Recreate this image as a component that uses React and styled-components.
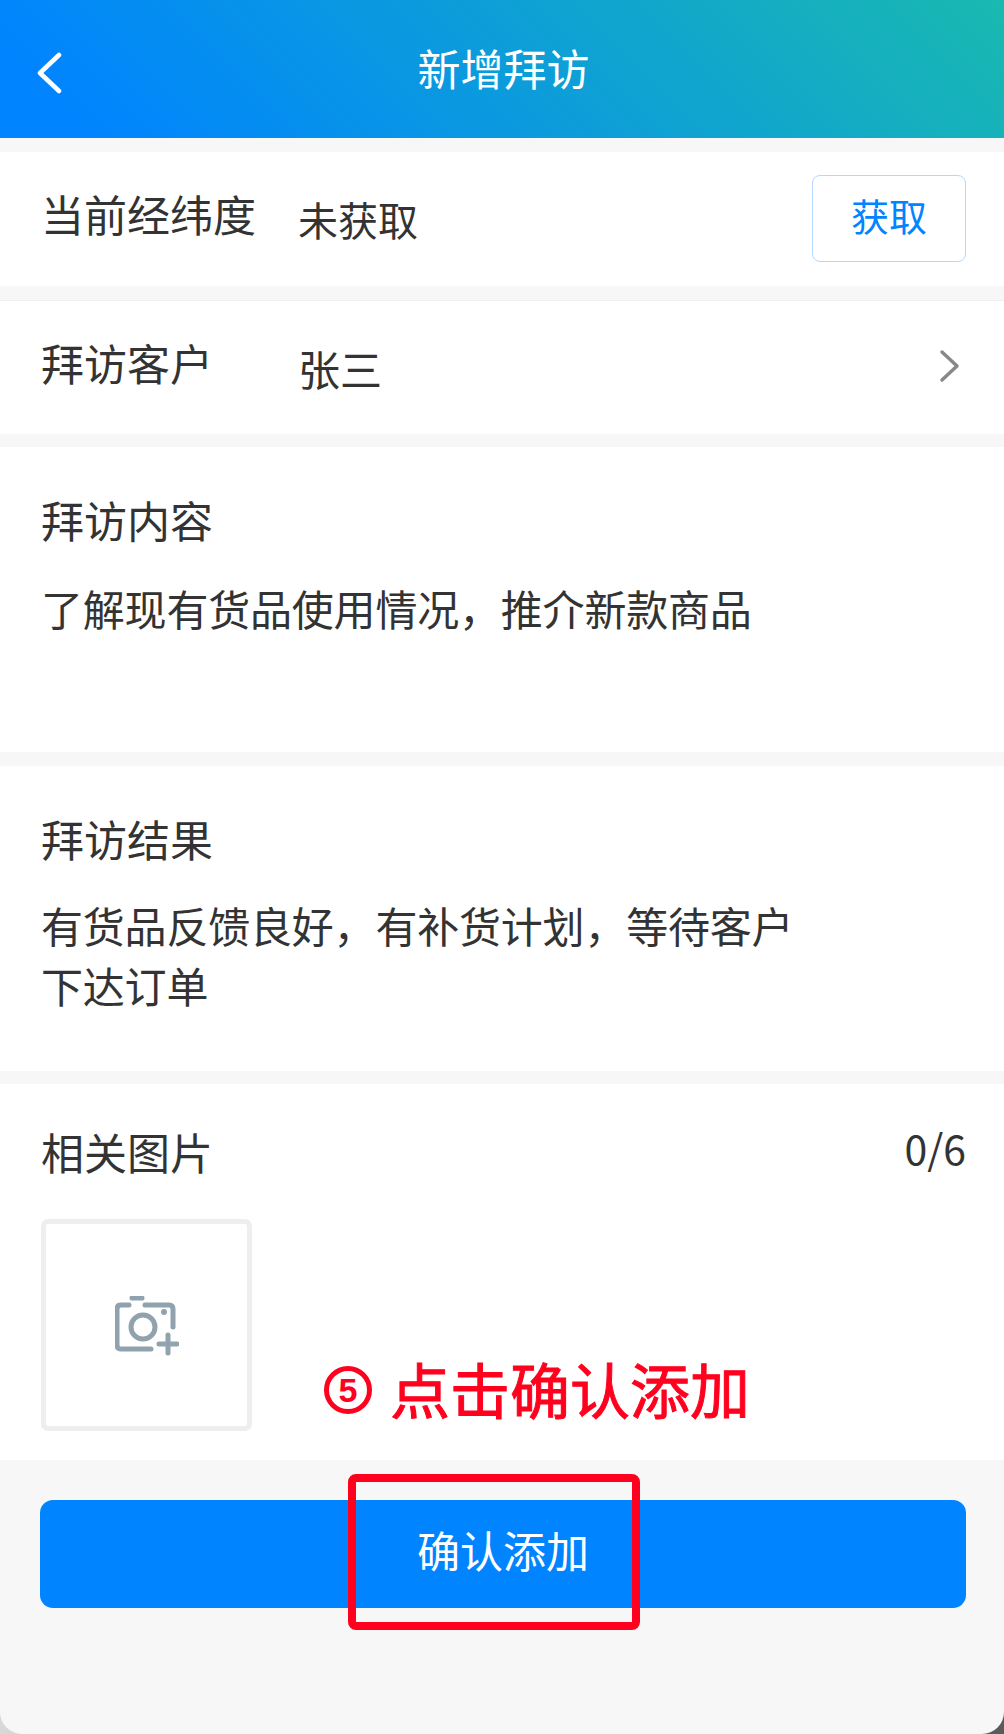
import React from 'react'
import styled, { createGlobalStyle } from 'styled-components'

const GlobalStyle = createGlobalStyle`
  html, body {
    margin: 0;
    padding: 0;
    background: linear-gradient(90deg, #d8d8d8 0%, #5a5a5a 100%);
  }
  body {
    font-family: "Noto Sans CJK SC", "Noto Sans", sans-serif;
  }
`

const Page = styled.div`
  position: relative;
  width: 1004px;
  height: 1734px;
  display: flex;
  flex-direction: column;
  background: #f7f7f7;
  border-radius: 0 0 22px 22px;
  overflow: hidden;
`

const Header = styled.header`
  height: 138px;
  flex: none;
  box-sizing: border-box;
  padding: 8px 32px 0 35px;
  display: grid;
  grid-template-columns: 28px 1fr 28px;
  align-items: center;
  background: linear-gradient(45deg, #0084ff 8%, #1ab9b0 100%);
`

const Title = styled.h1`
  margin: 0 0 12px;
  text-align: center;
  color: #fff;
  font-size: 43px;
  font-weight: 400;
  line-height: 60px;
`

const Section = styled.section`
  flex: none;
  box-sizing: border-box;
  height: ${p => p.$height}px;
  margin-top: ${p => p.$gap || 14}px;
  background: #fff;
`

const Row = styled(Section)`
  display: flex;
  align-items: center;
  padding: 0 38px 0 41px;
  border-top: ${p => (p.$line ? '1px solid #f0f0f0' : '0')};
`

const Label = styled.span`
  flex: none;
  width: ${p => (p.$wide ? '257px' : 'auto')};
  margin-bottom: ${p => (p.$wide ? '12px' : '0')};
  color: #333;
  font-size: 43px;
  line-height: 60px;
`

const Value = styled.span`
  flex: 1;
  color: #333;
  font-size: ${p => p.$size}px;
  line-height: 60px;
`

const FetchButton = styled.button`
  flex: none;
  width: 154px;
  height: 87px;
  margin-bottom: 2px;
  padding: 0 0 8px;
  background: #fff;
  border: 1px solid #b3d8ff;
  border-radius: 8px;
  color: #0084ff;
  font-family: inherit;
  font-size: 38px;
`

const Chevron = styled.span`
  display: flex;
  margin: 0 5px 4px 0;
`

const Block = styled(Section)`
  padding: ${p => p.$top || 42}px 38px 0 41px;
`

const BlockText = styled.p`
  margin: ${p => p.$top || 29}px 0 0;
  width: 770px;
  color: #333;
  font-size: 42px;
  letter-spacing: -0.2px;
  line-height: 60px;
`

const BlockHead = styled.div`
  display: flex;
  justify-content: space-between;
`

const Count = styled.span`
  margin-top: -4px;
  color: #333;
  font-size: 41px;
  line-height: 60px;
`

const UploadBox = styled.div`
  box-sizing: border-box;
  width: 211px;
  height: 212px;
  margin-top: 38px;
  padding-top: 2px;
  display: flex;
  align-items: center;
  justify-content: center;
  border: 5px solid #eee;
  border-radius: 7px;
`

const Footer = styled.footer`
  flex: 1;
  padding: 40px 38px 0 40px;
`

const SubmitButton = styled.button`
  display: block;
  width: 100%;
  height: 108px;
  padding: 0 0 10px;
  border: 0;
  border-radius: 13px;
  background: #0084ff;
  color: #fff;
  font-family: inherit;
  font-size: 43px;
`

const Hint = styled.div`
  position: absolute;
  left: 324px;
  top: 1346px;
  display: flex;
  align-items: center;
  gap: 18px;
  color: #ff001e;
  font-size: 60px;
  line-height: 84px;
  -webkit-text-stroke: 1px #ff001e;
`

const HintMark = styled.span`
  box-sizing: border-box;
  width: 48px;
  height: 48px;
  margin-top: 4px;
  display: flex;
  align-items: center;
  justify-content: center;
  border: 5px solid #ff001e;
  border-radius: 50%;
  font-family: "Liberation Sans", sans-serif;
  font-size: 34px;
  font-weight: 700;
  line-height: 1;
  -webkit-text-stroke: 0;
`

const HighlightBox = styled.div`
  position: absolute;
  left: 348px;
  top: 1474px;
  box-sizing: border-box;
  width: 292px;
  height: 156px;
  border: 8px solid #ff001e;
  border-radius: 8px;
`

const BackIcon = () => (
  <svg width="28" height="42" viewBox="0 0 28 42" fill="none">
    <path d="M24 3 L5 21 L24 39" stroke="#fff" strokeWidth="4.5" strokeLinecap="round" strokeLinejoin="round" />
  </svg>
)

const ChevronIcon = () => (
  <svg width="22" height="34" viewBox="0 0 22 34" fill="none">
    <path d="M3 3 L18 17 L3 31" stroke="#888" strokeWidth="3.5" strokeLinecap="round" strokeLinejoin="round" />
  </svg>
)

const CameraIcon = () => (
  <svg width="64" height="60" viewBox="0 0 64 60" fill="none" stroke="#8fa2ad" strokeWidth="5" strokeLinecap="round" strokeLinejoin="round">
    <path d="M14 9 H6 Q2 9 2 13 V49 Q2 53 6 53 H36" />
    <path d="M30 9 H54 Q58 9 58 13 V31" />
    <path d="M17 2 H27" />
    <circle cx="28" cy="31" r="12" />
    <circle cx="49" cy="16" r="3" fill="#8fa2ad" stroke="none" />
    <path d="M44 48 H62 M53 39 V57" />
  </svg>
)

const App = () => {
  return (
    <Page>
      <GlobalStyle />
      <Header>
        <BackIcon />
        <Title>新增拜访</Title>
      </Header>

      <Row $height={134}>
        <Label $wide>当前经纬度</Label>
        <Value $size={40}>未获取</Value>
        <FetchButton>获取</FetchButton>
      </Row>

      <Row $height={134} $line>
        <Label $wide>拜访客户</Label>
        <Value $size={42}>张三</Value>
        <Chevron>
          <ChevronIcon />
        </Chevron>
      </Row>

      <Block $height={305} $gap={13}>
        <Label>拜访内容</Label>
        <BlockText>了解现有货品使用情况，推介新款商品</BlockText>
      </Block>

      <Block $height={305}>
        <Label>拜访结果</Label>
        <BlockText $top={27}>有货品反馈良好，有补货计划，等待客户下达订单</BlockText>
      </Block>

      <Block $height={376} $gap={13} $top={37}>
        <BlockHead>
          <Label>相关图片</Label>
          <Count>0/6</Count>
        </BlockHead>
        <UploadBox>
          <CameraIcon />
        </UploadBox>
      </Block>

      <Footer>
        <SubmitButton>确认添加</SubmitButton>
      </Footer>

      <Hint>
        <HintMark>5</HintMark>
        点击确认添加
      </Hint>
      <HighlightBox />
    </Page>
  )
}

export default App
